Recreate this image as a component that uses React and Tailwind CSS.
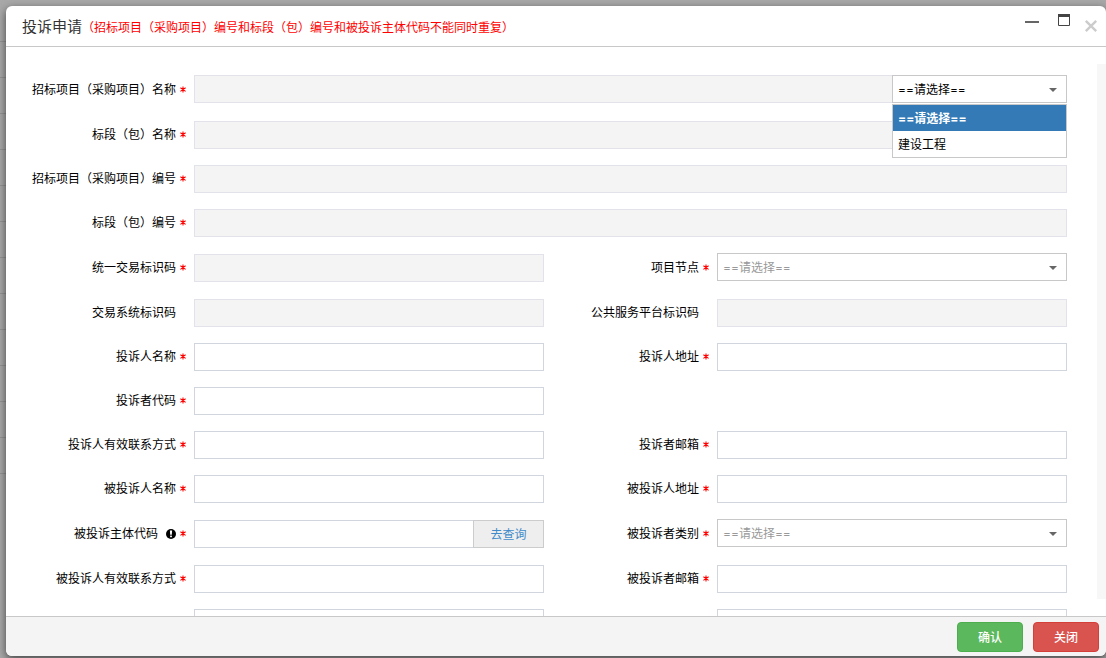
import { useState } from "react";

const inputBase = "h-7 w-full min-w-0 border px-2 text-xs text-black outline-none";
const editable = "border-[#d1d5de] bg-white";
const readOnlyStyle = "border-[#e2e3ea] bg-[#f4f4f4]";

function Label({ id, text, required, info }) {
  return (
    <label
      htmlFor={id}
      className="flex h-7 items-center justify-end self-center pr-2 pb-px text-xs whitespace-nowrap text-black"
    >
      <span>{text}</span>
      {info && (
        <svg className="ml-2 h-2.5 w-2.5" viewBox="0 0 10 10" aria-hidden="true">
          <circle cx="5" cy="5" r="5" fill="#000" />
          <path d="M3.9 1.6h2.2L5.8 5.8H4.2z" fill="#fff" />
          <rect x="4.1" y="6.6" width="1.8" height="1.6" fill="#fff" />
        </svg>
      )}
      <span className="flex h-4 w-2.5 items-center justify-end" aria-hidden="true">
        {required && (
          <svg className="h-2 w-1.5" viewBox="0 0 6 8" stroke="#f00" fill="none">
            <path d="M3 0.6v6M0.4 1.8 5.6 5.4M5.6 1.8 0.4 5.4" strokeWidth="1.1" />
          </svg>
        )}
      </span>
    </label>
  );
}

function Text({ id, readOnly, wide }) {
  return (
    <input
      id={id}
      type="text"
      readOnly={readOnly}
      className={`${inputBase} ${readOnly ? readOnlyStyle : editable} ${wide ? "col-span-3" : ""} self-center`}
    />
  );
}

function Select({ id, label, muted, options = [] }) {
  return (
    <div className="relative w-full">
      <select
        id={id}
        aria-label={label}
        className={`block h-7 w-full appearance-none border border-[#c8c8c8] bg-white pt-0.5 pr-6 pl-[5px] text-xs outline-none ${muted ? "text-[#999]" : "text-black"}`}
      >
        <option>==请选择==</option>
        {options.map((o) => (
          <option key={o}>{o}</option>
        ))}
      </select>
      <svg className="pointer-events-none absolute top-[13px] right-2.5 h-1 w-2" viewBox="0 0 8 4" aria-hidden="true">
        <path d="M0 0h8L4 4z" fill="#666" />
      </svg>
    </div>
  );
}

const rows = [
  [{ id: "sectionName", text: "标段（包）名称", required: true, readOnly: true, wide: true }],
  [{ id: "projectCode", text: "招标项目（采购项目）编号", required: true, readOnly: true, wide: true }],
  [{ id: "sectionCode", text: "标段（包）编号", required: true, readOnly: true, wide: true }],
  [
    { id: "tradeCode", text: "统一交易标识码", required: true, readOnly: true },
    { id: "projectNode", text: "项目节点", required: true, select: true },
  ],
  [
    { id: "systemCode", text: "交易系统标识码", readOnly: true },
    { id: "platformCode", text: "公共服务平台标识码", readOnly: true },
  ],
  [
    { id: "complainant", text: "投诉人名称", required: true },
    { id: "complainantAddress", text: "投诉人地址", required: true },
  ],
  [{ id: "complainantCode", text: "投诉者代码", required: true }],
  [
    { id: "complainantPhone", text: "投诉人有效联系方式", required: true },
    { id: "complainantMail", text: "投诉者邮箱", required: true },
  ],
  [
    { id: "respondent", text: "被投诉人名称", required: true },
    { id: "respondentAddress", text: "被投诉人地址", required: true },
  ],
  [
    { id: "respondentCode", text: "被投诉主体代码", required: true, info: true, query: true },
    { id: "respondentType", text: "被投诉者类别", required: true, select: true },
  ],
  [
    { id: "respondentPhone", text: "被投诉人有效联系方式", required: true },
    { id: "respondentMail", text: "被投诉者邮箱", required: true },
  ],
  [
    { id: "extraA", text: "" },
    { id: "extraB", text: "" },
  ],
];

const rowClass = "grid grid-cols-[188px_1fr_173px_1fr]";

function Field({ field }) {
  if (field.select) return <Select id={field.id} muted />;
  if (field.query) {
    return (
      <div className="flex self-center">
        <input id={field.id} type="text" className={`${inputBase} ${editable} border-r-0`} />
        <button
          type="button"
          className="h-7 w-[71px] shrink-0 border border-[#ccc] bg-[#eee] pt-0.5 text-xs text-[#428bca]"
        >
          去查询
        </button>
      </div>
    );
  }
  return <Text id={field.id} readOnly={field.readOnly} wide={field.wide} />;
}

export default function App() {
  const [choice, setChoice] = useState(0);
  const choices = ["==请选择==", "建设工程"];
  return (
    <div className="flex h-screen flex-col overflow-hidden bg-[#a8a8a8] bg-[repeating-linear-gradient(to_bottom,transparent_0px,transparent_35px,#949494_35px,#949494_36px)] bg-[size:100%_468px] bg-[position:0_6px] bg-no-repeat pt-1.5 pb-0.5 pl-1.5 font-[Inter,'Noto_Sans_CJK_SC',sans-serif]">
      <section
        role="dialog"
        aria-labelledby="title"
        className="flex min-h-0 flex-1 flex-col overflow-hidden rounded-md bg-white shadow-[0_3px_9px_rgba(0,0,0,0.6)]"
      >
        <header className="flex h-[41px] shrink-0 items-center border-b border-[#c8c8c8] pl-4">
          <h1 id="title" className="flex items-center pt-0.5 text-[15px] text-[#333]">
            投诉申请
            <span className="pt-0.5 text-xs text-[#f00]">
              （招标项目（采购项目）编号和标段（包）编号和被投诉主体代码不能同时重复）
            </span>
          </h1>
          <div className="ml-auto flex items-start self-start pt-2 pr-2">
            <button type="button" aria-label="最小化" className="mr-4 h-5 w-5">
              <svg viewBox="0 0 20 20" className="h-5 w-5">
                <path d="M3 7h14v2H3z" fill="#666" />
              </svg>
            </button>
            <button type="button" aria-label="最大化" className="mr-3.5 h-5 w-3">
              <svg viewBox="0 0 12 20" className="h-5 w-3">
                <path d="M0.5 1v10.5h11V1" fill="none" stroke="#444" />
                <path d="M0 0h12v3H0z" fill="#444" />
              </svg>
            </button>
            <button type="button" aria-label="关闭窗口" className="h-5 w-3.5 pt-1">
              <svg viewBox="0 0 14 14" className="h-3.5 w-3.5">
                <path d="M1.8 1.8l10.4 10.4M12.2 1.8L1.8 12.2" stroke="#ccc" strokeWidth="2.4" />
              </svg>
            </button>
          </div>
        </header>

        <div className="flex min-h-0 flex-1 overflow-hidden">
          <form className="flex min-w-0 flex-1 flex-col gap-4 pt-7 pr-[30px]">
            <div className={`${rowClass} h-[30px] shrink-0`}>
              <Label id="projectName" text="招标项目（采购项目）名称" required />
              <div className="col-span-3 flex">
                <input id="projectName" type="text" readOnly className={`${inputBase} ${readOnlyStyle} border-r-0`} />
                <div className="relative w-[175px] shrink-0">
                  <Select id="projectKind" label="项目类型" options={["建设工程"]} />
                  <ul
                    role="listbox"
                    aria-label="项目类型选项"
                    className="absolute inset-x-0 top-[29px] z-10 border border-[#c8c8c8] bg-white text-xs"
                  >
                    {choices.map((c, i) => (
                      <li
                        key={c}
                        role="option"
                        aria-selected={choice === i}
                        onClick={() => setChoice(i)}
                        className={`flex h-[26px] items-center px-[5px] pt-0.5 ${choice === i ? "bg-[#337ab7] font-bold text-white" : "text-black"}`}
                      >
                        {c}
                      </li>
                    ))}
                  </ul>
                </div>
              </div>
            </div>
            {rows.map((fields) => (
              <div
                key={fields[0].id}
                className={`${rowClass} shrink-0 ${fields.some((f) => f.select) ? "h-[30px]" : "h-7"}`}
              >
                {fields.map((f) => (
                  <div key={f.id} className="contents">
                    <Label id={f.id} text={f.text} required={f.required} info={f.info} />
                    <Field field={f} />
                  </div>
                ))}
              </div>
            ))}
          </form>
          <div className="my-[17px] w-[9px] shrink-0 bg-[#f7f7f7]" />
        </div>

        <footer className="flex h-10 shrink-0 items-center justify-end gap-2.5 border-t border-[#c8c8c8] bg-[#f4f4f4] pr-[7px]">
          <button
            type="button"
            className="h-[30px] w-[66px] rounded border border-[#4cae4c] bg-[#5cb85c] pt-0.5 text-xs font-medium text-white"
          >
            确认
          </button>
          <button
            type="button"
            className="h-[30px] w-[66px] rounded border border-[#d43f3a] bg-[#d9534f] pt-0.5 text-xs font-medium text-white"
          >
            关闭
          </button>
        </footer>
      </section>
    </div>
  );
}
